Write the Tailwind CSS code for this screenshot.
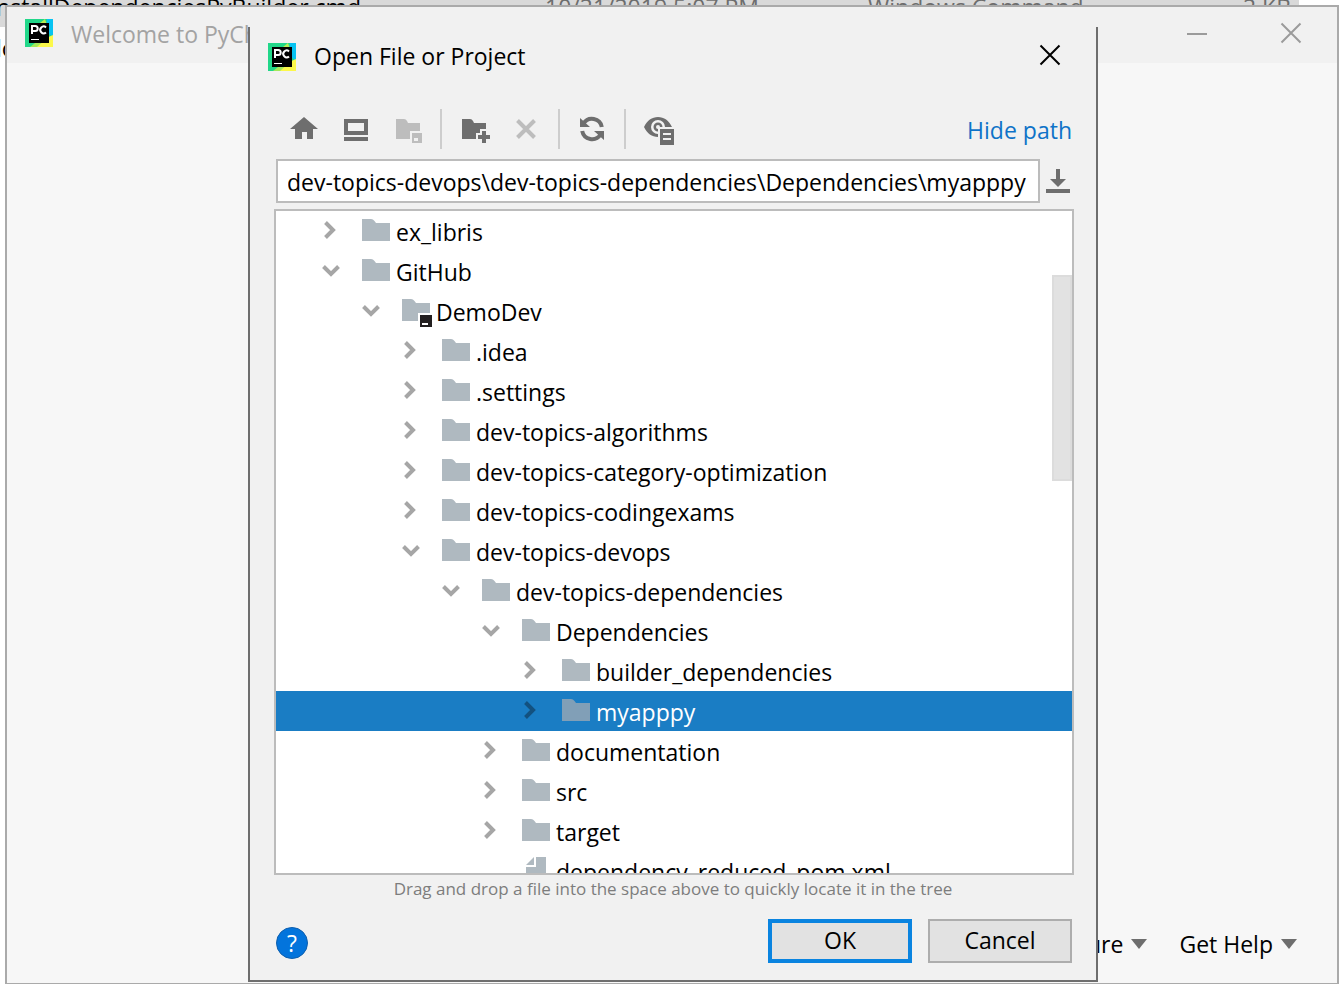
<!DOCTYPE html>
<html lang="en">
<head>
<meta charset="utf-8">
<title>Open File or Project</title>
<script src="https://cdn.jsdelivr.net/npm/@tailwindcss/browser@4"></script>
</head>
<body class="bg-white">
<svg class="hidden" aria-hidden="true">
  <defs>
    <symbol id="pycharm" viewBox="0 0 28 28">
      <path fill="#21d789" d="M0 0h28v28H0z"/>
      <path fill="#07c3f2" d="M22 0h6v18l-7-6z"/>
      <path fill="#b8ee54" d="M15 4l5-4 2 6z"/>
      <path fill="#fcf84a" d="M28 16v12H10l9-8z"/>
      <path fill="#a5e85a" d="M12 28H5l10-8h6z"/>
      <path fill="#000" d="M4 4h20v20H4z"/>
      <path fill="none" stroke="#fff" stroke-width="2" d="M7 15V7h3.200a2.400 2.400 0 0 1 0 5H7M21 8.400a3.400 3.400 0 1 0 0 5"/>
      <path fill="#fff" d="M6 20h8v1H6z"/>
    </symbol>
    <symbol id="folder" viewBox="0 0 28 22"><path d="M0 0h9q2 0 3.500 2L14 4h14v18H0z"/></symbol>
    <symbol id="right" viewBox="0 0 18 18"><path fill="none" stroke="currentColor" stroke-width="4" d="M3.500 1.500 11 9l-7.500 7.500"/></symbol>
    <symbol id="down" viewBox="0 0 18 18"><path fill="none" stroke="currentColor" stroke-width="4" d="M1.500 5.500 9 13l7.500-7.500"/></symbol>
  </defs>
</svg>
<main class="relative h-screen overflow-hidden font-['Open_Sans','Noto_Sans',sans-serif] text-[23px] leading-8 text-black">

  <!-- file listing behind the windows -->
  <div class="absolute -top-[13px] left-0 right-[44px] flex h-10 items-center bg-[#d9d9d9] text-[#6d6d6d] whitespace-nowrap">
    <div class="flex w-[361px] justify-end text-black">InstallDependenciesPyBuilder.cmd</div>
    <div class="ml-[184px] w-[323px]">10/21/2019 5:07 PM</div>
    <div class="flex-1">Windows Command</div>
    <div class="pr-2">2 KB</div>
  </div>
  <div class="absolute -left-1 top-8">lo</div>

  <!-- welcome window -->
  <section class="absolute top-[5px] right-[4px] bottom-[7px] left-[5px] flex flex-col border-2 border-b border-[#aaaaaa] bg-[#f7f7f7]">
    <header class="flex h-14 items-start justify-between bg-[#f1f1f1] text-[#a3a3a3]">
      <div class="flex items-start pl-[18px] pt-3">
        <svg class="size-7"><use href="#pycharm"/></svg>
        <span class="-mt-px pl-[18px]">Welcome to PyCharm</span>
      </div>
      <div class="flex gap-[72px] pr-[35px] pt-[15px]">
        <button aria-label="Minimize"><svg class="size-[22px]" viewBox="0 0 22 22"><path stroke="#9b9b9b" stroke-width="2" d="M1 12h20"/></svg></button>
        <button aria-label="Close window"><svg class="size-[22px]" viewBox="0 0 22 22"><path stroke="#9b9b9b" stroke-width="2" d="M1.500 1.500l19 19m0-19l-19 19"/></svg></button>
      </div>
    </header>
    <footer class="mt-auto flex justify-end gap-8 pr-10 pb-[23px]">
      <button class="flex items-center gap-2">Configure <svg class="h-[10px] w-4" viewBox="0 0 16 10"><path fill="#6e6e6e" d="M0 0h16L8 10z"/></svg></button>
      <button class="flex items-center gap-2">Get Help <svg class="h-[10px] w-4" viewBox="0 0 16 10"><path fill="#6e6e6e" d="M0 0h16L8 10z"/></svg></button>
    </footer>
  </section>

  <!-- file chooser dialog -->
  <section role="dialog" aria-labelledby="dlg-title" class="absolute top-[27px] right-[245px] bottom-[9px] left-[248px] flex flex-col border-2 border-t-0 border-[#6e6e6e] bg-[#f1f1f1]">
    <header class="flex h-[60px] items-center pl-[18px] pr-[35px]">
      <svg class="size-7"><use href="#pycharm"/></svg>
      <h1 id="dlg-title" class="pb-[2px] pl-[18px]">Open File or Project</h1>
      <button class="ml-auto pb-1" aria-label="Close"><svg class="size-[22px]" viewBox="0 0 22 22"><path stroke="#000" stroke-width="2" d="M1.500 1.500l19 19m0-19l-19 19"/></svg></button>
    </header>

    <div class="mt-[22px] flex h-10 items-center pl-[38px] pr-6 text-[#6e6e6e]">
      <div class="flex gap-5">
        <button aria-label="Home"><svg class="size-8" viewBox="0 0 32 32" fill="currentColor"><path d="M16 4l14 12h-5v10h-6v-7h-5v7H7V16H2z"/></svg></button>
        <button aria-label="Desktop"><svg class="size-8" viewBox="0 0 32 32" fill="currentColor"><path fill-rule="evenodd" d="M4 6h24v16H4zM8 10v8h16v-8zM4 24h24v4H4z"/></svg></button>
        <button aria-label="Project directory" disabled><svg class="size-8" viewBox="0 0 32 32" fill="#bdbdbd"><path d="M4 6h8q2 0 3 2l1 2h12v8H18v8H4z"/><path fill-rule="evenodd" d="M20 20h10v10H20zM22 25v3h4v-3z"/></svg></button>
      </div>
      <div class="mx-4 h-10 w-[2px] bg-[#cdcdcd]"></div>
      <div class="flex gap-5">
        <button aria-label="New folder"><svg class="size-8" viewBox="0 0 32 32" fill="currentColor"><path d="M4 6h8q2 0 3 2l1 2h12v6h-6v4h-4v6H4z"/><path d="M24 18h4v4h4v4h-4v4h-4v-4h-4v-4h4z"/></svg></button>
        <button aria-label="Delete" disabled><svg class="size-8" viewBox="0 0 32 32"><path stroke="#bdbdbd" stroke-width="4" d="M7.500 7.500l17 17m0-17l-17 17"/></svg></button>
      </div>
      <div class="mx-4 h-10 w-[2px] bg-[#cdcdcd]"></div>
      <button aria-label="Refresh"><svg class="size-8" viewBox="0 0 32 32"><path fill="none" stroke="currentColor" stroke-width="4" d="M7.500 10.500A10 10 0 0 1 25.800 14M24.500 21.500A10 10 0 0 1 6.200 18"/><path fill="currentColor" d="M4 5l10 9H4zM28 27l-10-9h10z"/></svg></button>
      <div class="mx-4 h-10 w-[2px] bg-[#cdcdcd]"></div>
      <button aria-label="Show hidden files"><svg class="size-8" viewBox="0 0 32 32" fill="currentColor"><path fill-rule="evenodd" d="M2 14C5 7.500 10 4 16 4s11 3.500 14 10c-3 6.500-8 10-14 10S5 20.500 2 14zM16 7a7 7 0 1 0 0 14 7 7 0 0 0 0-14z"/><path fill-rule="evenodd" d="M16 9.500a4.500 4.500 0 1 0 0 9 4.500 4.500 0 0 0 0-9zM16 12a2 2 0 1 1 0 4 2 2 0 0 1 0-4z"/><path fill="#f1f1f1" d="M16 14h16v18H16z"/><path fill-rule="evenodd" d="M18 16h14v16H18zM21 20v2h8v-2zM21 25v2h8v-2z"/></svg></button>
      <a href="#" class="ml-auto pt-[2px] text-[#0f73c8]">Hide path</a>
    </div>

    <div class="mt-[10px] flex items-center gap-1 pl-[26px] pr-6">
      <input id="path" aria-label="Path" value="dev-topics-devops\dev-topics-dependencies\Dependencies\myapppy" class="h-11 min-w-0 flex-1 border-2 border-[#bcbcbc] bg-white pt-[2px] pr-3 pl-[10px] outline-none">
      <button aria-label="Path history"><svg class="h-8 w-7" viewBox="0 0 28 32" fill="#6e6e6e"><path d="M12 4h4v10h6l-8 8-8-8h6zM2 24h24v4H2z"/></svg></button>
    </div>

    <div class="relative mt-[6px] mr-[22px] ml-6 min-h-0 flex-1 overflow-hidden border-2 border-[#bcbcbc] bg-white">
      <ul role="tree" id="tree" class="fill-[#afb9c0] text-[#a6a6a6]"></ul>
      <div class="absolute right-0 top-16 h-[206px] w-5 border-2 border-[#dcdcdc] bg-[#e2e2e2]"></div>
    </div>

    <p class="text-center text-[17px] leading-7 text-[#7d7d7d]">Drag and drop a file into the space above to quickly locate it in the tree</p>

    <footer class="flex items-center gap-4 pt-4 pr-6 pb-[17px] pl-[26px]">
      <button aria-label="Help" class="mt-1 mr-auto size-8 rounded-full border border-[#0e5fae] bg-[#0374dc] text-center leading-7 text-white">?</button>
      <button class="h-11 w-36 border-4 border-[#0a84e0] bg-[#e2e2e2] pb-[2px]">OK</button>
      <button class="h-11 w-36 border-2 border-[#adadad] bg-[#e2e2e2] pb-[2px]">Cancel</button>
    </footer>
  </section>
</main>
<script>
const indent = ['pl-[46px]', 'pl-[86px]', 'pl-[126px]', 'pl-[166px]', 'pl-[206px]', 'pl-[246px]'];
const rows = [
  [0, 'right', 'ex_libris'], [0, 'down', 'GitHub'], [1, 'down', 'DemoDev', 'project'],
  [2, 'right', '.idea'], [2, 'right', '.settings'], [2, 'right', 'dev-topics-algorithms'],
  [2, 'right', 'dev-topics-category-optimization'], [2, 'right', 'dev-topics-codingexams'],
  [2, 'down', 'dev-topics-devops'], [3, 'down', 'dev-topics-dependencies'], [4, 'down', 'Dependencies'],
  [5, 'right', 'builder_dependencies'], [5, 'right', 'myapppy', 'selected'],
  [4, 'right', 'documentation'], [4, 'right', 'src'], [4, 'right', 'target'], [4, '', 'dependency_reduced_pom.xml', 'file']
];
const folder = '<svg class="h-[22px] w-7"><use href="#folder"/></svg>';
const project = '<svg class="-mb-2 h-[30px] w-[30px] max-w-none" viewBox="0 0 30 30"><path d="M0 0h9q2 0 3.500 2L14 4h14v10H16v8H0z"/><path fill="#231f20" d="M18 16h12v12H18z"/><path fill="#fff" d="M20 24h6v2h-6z"/></svg>';
const file = '<svg class="h-7 w-7" viewBox="0 0 28 28"><path d="M12 1v8H4zM14 1h10v26H4V11h10z"/></svg>';
document.getElementById('tree').innerHTML = rows.map(([level, arrow, name, kind]) => `
  <li role="treeitem" class="flex h-10 items-center whitespace-nowrap ${indent[level]} ${kind === 'selected' ? 'bg-[#1a7dc4] fill-[#819fb7] text-[#13517f]' : ''}">
    <span class="mb-[2px] mr-[22px] w-[18px]">${arrow ? `<svg class="size-[18px]"><use href="#${arrow}"/></svg>` : ''}</span>
    <span class="mb-[2px] mr-[6px] w-7">${kind === 'project' ? project : kind === 'file' ? file : folder}</span>
    <span class="pt-[2px] ${kind === 'selected' ? 'text-white' : 'text-black'}">${name}</span>
  </li>`).join('');
const path = document.getElementById('path');
path.scrollLeft = path.scrollWidth;
</script>
</body>
</html>
